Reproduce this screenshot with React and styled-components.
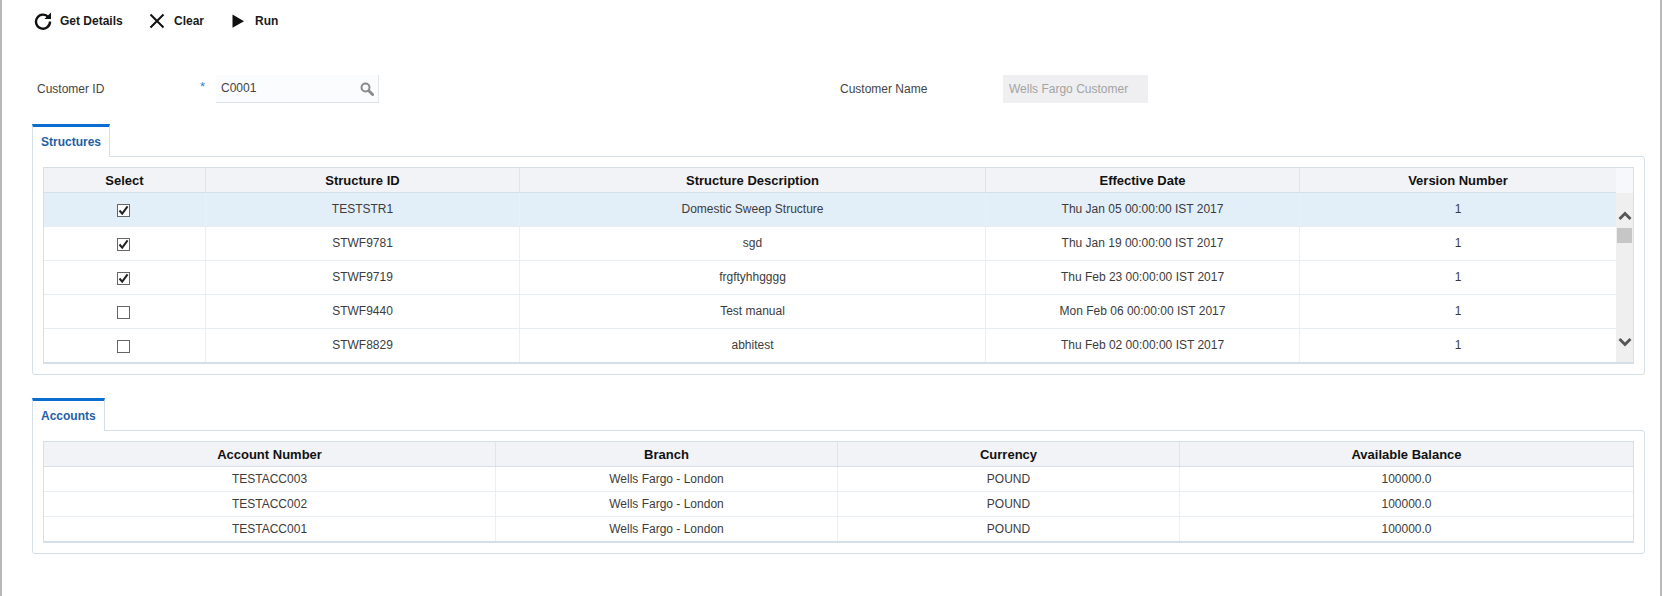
import styled, { createGlobalStyle } from "styled-components";

const structures = [
  { id: "TESTSTR1", desc: "Domestic Sweep Structure", date: "Thu Jan 05 00:00:00 IST 2017", checked: true, active: true },
  { id: "STWF9781", desc: "sgd", date: "Thu Jan 19 00:00:00 IST 2017", checked: true },
  { id: "STWF9719", desc: "frgftyhhgggg", date: "Thu Feb 23 00:00:00 IST 2017", checked: true },
  { id: "STWF9440", desc: "Test manual", date: "Mon Feb 06 00:00:00 IST 2017", checked: false },
  { id: "STWF8829", desc: "abhitest", date: "Thu Feb 02 00:00:00 IST 2017", checked: false },
];

const accounts = ["TESTACC003", "TESTACC002", "TESTACC001"];

const structureCols = "162px 314px 466px 314px 316px";
const accountCols = "452px 342px 342px 1fr";

const App = () => {
  return (
    <>
      <GlobalStyle />
      <Page>
        <Toolbar>
          <ToolButton $width={114}>
            <svg width="18" height="18" viewBox="0 0 18 18" fill="none">
              <path d="M14.4 5.2A7 7 0 1 0 16 9.6" stroke="#111" strokeWidth="2.4" />
              <path d="M10.4 7 L17 7 L17 0.6 Z" fill="#111" />
            </svg>
            <span>Get Details</span>
          </ToolButton>
          <ToolButton $width={81}>
            <svg width="18" height="18" viewBox="0 0 18 18" fill="none">
              <path d="M2.5 2.5 L15.5 15.5 M15.5 2.5 L2.5 15.5" stroke="#111" strokeWidth="2" />
            </svg>
            <span>Clear</span>
          </ToolButton>
          <ToolButton>
            <svg width="18" height="18" viewBox="0 0 18 18">
              <path d="M3.5 2.5 L15 9.2 L3.5 15.8 Z" fill="#111" />
            </svg>
            <span>Run</span>
          </ToolButton>
        </Toolbar>

        <FormRow>
          <Label $width={162}>Customer ID</Label>
          <Required>*</Required>
          <SearchField>
            <span>C0001</span>
            <svg width="14" height="14" viewBox="0 0 14 14" fill="none">
              <circle cx="5.5" cy="5.5" r="4" stroke="#8a8a8a" strokeWidth="2" />
              <path d="M8.8 8.8 L12.6 12.6" stroke="#8a8a8a" strokeWidth="2.8" strokeLinecap="round" />
            </svg>
          </SearchField>
          <NameLabel>Customer Name</NameLabel>
          <ReadOnlyField>Wells Fargo Customer</ReadOnlyField>
        </FormRow>

        <Section>
          <Tab $width={78}>Structures</Tab>
          <Panel>
            <TableFrame>
              <TableMain>
                <Row $cols={structureCols} $head>
                  <HeadCell>Select</HeadCell>
                  <HeadCell>Structure ID</HeadCell>
                  <HeadCell>Structure Description</HeadCell>
                  <HeadCell>Effective Date</HeadCell>
                  <HeadCell>Version Number</HeadCell>
                </Row>
                {structures.map(s => (
                  <Row key={s.id} $cols={structureCols} $active={s.active} $height={34}>
                    <Cell>
                      <CheckBox>
                        {s.checked && (
                          <svg width="11" height="11" viewBox="0 0 11 11" fill="none">
                            <path d="M1.5 5.5 L4.2 8.6 L9.6 1.4" stroke="#222" strokeWidth="2" />
                          </svg>
                        )}
                      </CheckBox>
                    </Cell>
                    <LiftedCell>{s.id}</LiftedCell>
                    <LiftedCell>{s.desc}</LiftedCell>
                    <LiftedCell>{s.date}</LiftedCell>
                    <LiftedCell>1</LiftedCell>
                  </Row>
                ))}
              </TableMain>
              <ScrollBar>
                <ScrollHead />
                <ScrollTrack>
                  <Arrow>
                    <svg width="14" height="10" viewBox="0 0 14 10" fill="none">
                      <path d="M1.5 8 L7 2.5 L12.5 8" stroke="#555" strokeWidth="2.8" />
                    </svg>
                  </Arrow>
                  <Thumb />
                  <TrackFill />
                  <Arrow>
                    <svg width="14" height="10" viewBox="0 0 14 10" fill="none">
                      <path d="M1.5 2 L7 7.5 L12.5 2" stroke="#555" strokeWidth="2.8" />
                    </svg>
                  </Arrow>
                </ScrollTrack>
              </ScrollBar>
            </TableFrame>
          </Panel>
        </Section>

        <AccountsSection>
          <Tab $width={73}>Accounts</Tab>
          <Panel>
            <TableFrame>
              <TableMain>
                <Row $cols={accountCols} $head>
                  <HeadCell>Account Number</HeadCell>
                  <HeadCell>Branch</HeadCell>
                  <HeadCell>Currency</HeadCell>
                  <HeadCell>Available Balance</HeadCell>
                </Row>
                {accounts.map(a => (
                  <Row key={a} $cols={accountCols} $height={25}>
                    <Cell>{a}</Cell>
                    <Cell>Wells Fargo - London</Cell>
                    <Cell>POUND</Cell>
                    <Cell>100000.0</Cell>
                  </Row>
                ))}
              </TableMain>
            </TableFrame>
          </Panel>
        </AccountsSection>
      </Page>
    </>
  );
};

export default App;

const GlobalStyle = createGlobalStyle`
  * {
    box-sizing: border-box;
  }
  html, body {
    margin: 0;
    padding: 0;
    background: #fff;
    overflow: hidden;
  }
  body {
    font-family: "Liberation Sans", Arial, sans-serif;
    font-size: 12px;
    color: #333;
  }
`;

const Page = styled.div`
  width: 1662px;
  height: 596px;
  padding: 0 15px 0 30px;
  border-left: 2px solid #b9b9b9;
  border-right: 2px solid #b9b9b9;
  background: #fff;
`;

const Toolbar = styled.div`
  height: 42px;
  display: flex;
  align-items: center;
  padding-left: 2px;
`;

const ToolButton = styled.div`
  width: ${p => (p.$width ? `${p.$width}px` : "auto")};
  display: flex;
  align-items: center;
  gap: 8px;
  font-weight: 700;
  color: #1a1a1a;
  svg {
    flex-shrink: 0;
  }
`;

const FormRow = styled.div`
  height: 30px;
  margin-top: 32px;
  display: flex;
  align-items: center;
  padding-left: 5px;
`;

const Label = styled.div`
  width: ${p => p.$width}px;
  line-height: 30px;
  color: #444;
`;

const Required = styled.div`
  width: 17px;
  padding-left: 1px;
  color: #2f7fd6;
  font-size: 13px;
  margin-top: -6px;
`;

const SearchField = styled.div`
  width: 163px;
  height: 28px;
  padding: 0 4px 1px 5px;
  display: flex;
  align-items: center;
  justify-content: space-between;
  background: #fbfcfd;
  border-right: 1px solid #e3e5e8;
  border-bottom: 1px solid #dde1e6;
  color: #444;
  svg {
    margin-top: 2px;
  }
`;

const NameLabel = styled(Label)`
  width: 163px;
  margin-left: 461px;
`;

const ReadOnlyField = styled.div`
  width: 145px;
  height: 28px;
  padding-left: 6px;
  display: flex;
  align-items: center;
  background: #efeff1;
  color: #a3a3a3;
`;

const Section = styled.section`
  margin-top: 20px;
`;

const AccountsSection = styled(Section)`
  margin-top: 23px;
`;

const Tab = styled.div`
  width: ${p => p.$width}px;
  height: 33px;
  margin-bottom: -1px;
  position: relative;
  z-index: 1;
  padding-left: 8px;
  display: flex;
  align-items: center;
  background: #fff;
  border-top: 3px solid #0a6ed1;
  border-left: 1px solid #d5dfe8;
  border-right: 1px solid #d5dfe8;
  color: #1f5fa8;
  font-weight: 700;
`;

const Panel = styled.div`
  width: 1613px;
  padding: 10px;
  background: #fff;
  border: 1px solid #d5dfe8;
  border-radius: 0 3px 3px 3px;
`;

const TableFrame = styled.div`
  display: flex;
  border: 1px solid #d5dfe8;
  border-bottom-width: 2px;
`;

const TableMain = styled.div`
  flex: 1;
  min-width: 0;
`;

const Row = styled.div`
  height: ${p => (p.$head ? 25 : p.$height)}px;
  display: grid;
  grid-template-columns: ${p => p.$cols};
  background: ${p => (p.$head ? "#f1f3f6" : p.$active ? "#e2eef8" : "#fff")};
  border-bottom: 1px solid ${p => (p.$head ? "#d5dfe8" : "#e8edf1")};
  &:last-child {
    height: ${p => p.$height - 1}px;
    border-bottom: 0;
  }
`;

const HeadCell = styled.div`
  display: flex;
  align-items: center;
  justify-content: center;
  font-size: 13px;
  font-weight: 700;
  color: #111;
  border-right: 1px solid #dfe4e9;
  &:last-child {
    border-right: 0;
  }
`;

const Cell = styled.div`
  display: flex;
  align-items: center;
  justify-content: center;
  color: #3c3c3c;
  border-right: 1px solid #edf0f3;
  &:last-child {
    border-right: 0;
  }
`;

const LiftedCell = styled(Cell)`
  padding-bottom: 2px;
`;

const CheckBox = styled.div`
  width: 13px;
  height: 13px;
  margin: 2px 3px 0 0;
  display: flex;
  align-items: center;
  justify-content: center;
  background: #fff;
  border: 1px solid #666;
`;

const ScrollBar = styled.div`
  width: 17px;
  flex-shrink: 0;
  display: flex;
  flex-direction: column;
`;

const ScrollHead = styled.div`
  height: 25px;
  background: #f6f8fb;
`;

const ScrollTrack = styled.div`
  flex: 1;
  padding: 15px 0 12px;
  display: flex;
  flex-direction: column;
  align-items: center;
  background: #efefef;
`;

const Arrow = styled.div`
  height: 16px;
  display: flex;
  align-items: center;
  justify-content: center;
`;

const Thumb = styled.div`
  width: 15px;
  height: 15px;
  margin-top: 4px;
  background: #c6c6c6;
`;

const TrackFill = styled.div`
  flex: 1;
`;
